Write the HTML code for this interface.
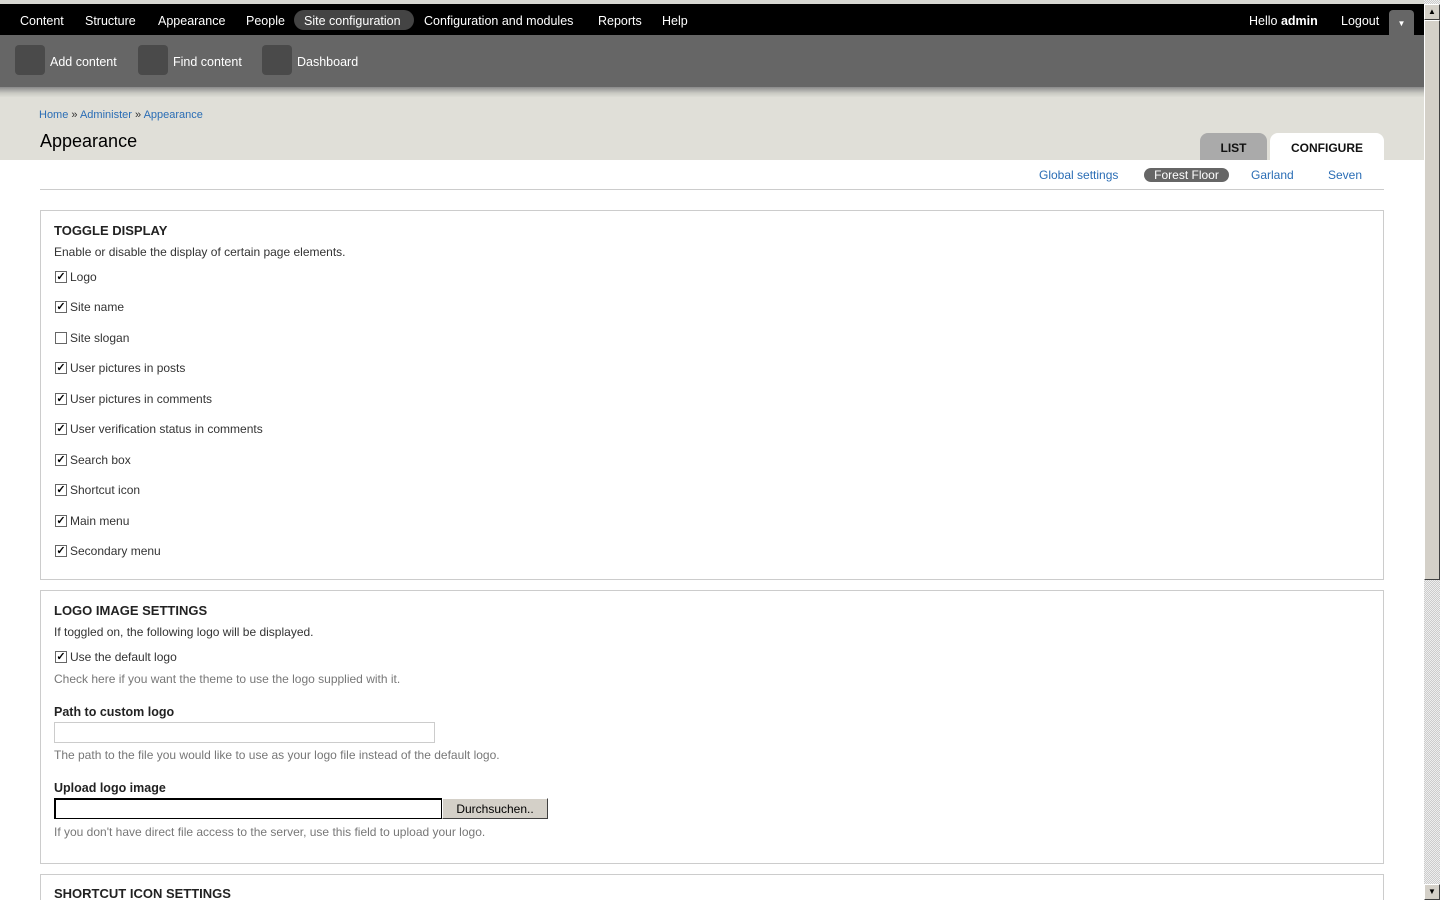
<!DOCTYPE html>
<html style="width:1440px;height:900px;overflow:hidden"><head><meta charset="utf-8"><style>
*{margin:0;padding:0;box-sizing:border-box}
body{width:1440px;height:900px;overflow:hidden;background:#fff;font-family:"Liberation Sans",sans-serif;font-size:12px;color:#333;position:relative}
.a{position:absolute;white-space:nowrap}
#top{left:0;top:0;width:1424px;height:4px;background:#d8d8d2}
#bar{left:0;top:4px;width:1424px;height:31px;background:#000}
#bar span{position:absolute;top:10px;color:#fff;font-size:12.5px}
#pill{left:294px;top:6px;width:120px;height:20px;background:#444;border-radius:10px}
#tb{left:0;top:35px;width:1424px;height:52px;background:#666}
#sh{left:0;top:87px;width:1424px;height:10px;background:linear-gradient(#8a8a8a,#c8c8c2 60%,#dcdcd5)}
.ic{position:absolute;top:10px;width:30px;height:30px;background:#4a4a4a;border-radius:4px}
#tb span{position:absolute;top:20px;color:#fff;font-size:12.5px}
#hd{left:0;top:97px;width:1424px;height:63px;background:#e0dfd8}
a{color:#2a6db5;text-decoration:none}
.fs{position:absolute;left:40px;width:1344px;border:1px solid #ccc}
.cb{position:absolute;left:55px;width:12px;height:12px;border:1px solid #666;background:#fff;font-size:11px;line-height:10px;text-align:center;font-weight:bold;color:#000}
.lb{position:absolute;left:70px;font-size:12px;color:#333}
.h{font-weight:bold;font-size:13px;color:#222}
.d{color:#777;font-size:12px}
#sb{left:1424px;top:0;width:16px;height:900px;background:repeating-conic-gradient(#ccc 0 25%,#eee 0 50%) 0 0/2px 2px}
.btn{position:absolute;width:16px;height:16px;background:#d4d0c8;border:1px solid;border-color:#fff #404040 #404040 #fff;font-size:8px;text-align:center;line-height:14px;color:#000}
</style></head><body>
<div class="a" id="top"></div>
<div class="a" id="bar">
<div class="a" id="pill"></div>
<span style="left:20px">Content</span><span style="left:85px">Structure</span><span style="left:158px">Appearance</span><span style="left:246px">People</span><span style="left:304px">Site configuration</span><span style="left:424px">Configuration and modules</span><span style="left:598px">Reports</span><span style="left:662px">Help</span>
<span style="left:1249px">Hello <b>admin</b></span><span style="left:1341px">Logout</span>
<div class="a" style="left:1389px;top:6px;width:25px;height:25px;background:#666;border-radius:4px 4px 0 0;color:#fff;font-size:8px;text-align:center;line-height:28px">▼</div>
</div>
<div class="a" id="tb">
<div class="ic" style="left:15px"></div><span style="left:50px">Add content</span>
<div class="ic" style="left:138px"></div><span style="left:173px">Find content</span>
<div class="ic" style="left:262px"></div><span style="left:297px">Dashboard</span>
</div>
<div class="a" id="sh"></div>
<div class="a" id="hd">
<div class="a" style="left:39px;top:12px;font-size:11px;color:#333"><a>Home</a> » <a>Administer</a> » <a>Appearance</a></div>
<div class="a" style="left:40px;top:34px;font-size:18px;color:#000">Appearance</div>
<div class="a" style="left:1200px;top:36px;width:67px;height:27px;background:#aaa;border-radius:8px 8px 0 0;font-weight:bold;font-size:12px;color:#111;text-align:center;line-height:30px">LIST</div>
<div class="a" style="left:1270px;top:36px;width:114px;height:27px;background:#fff;border-radius:8px 8px 0 0;font-weight:bold;font-size:12px;color:#111;text-align:center;line-height:30px">CONFIGURE</div>
</div>
<div class="a" style="left:1039px;top:168px"><a>Global settings</a></div>
<div class="a" style="left:1144px;top:168px;width:85px;height:14px;background:#666;border-radius:7px;color:#fff;text-align:center;line-height:14px">Forest Floor</div>
<div class="a" style="left:1251px;top:168px"><a>Garland</a></div>
<div class="a" style="left:1328px;top:168px"><a>Seven</a></div>
<div class="a" style="left:40px;top:189px;width:1344px;height:1px;background:#ccc"></div>

<div class="fs" style="top:210px;height:370px"></div>
<div class="a h" style="left:54px;top:223px">TOGGLE DISPLAY</div>
<div class="a" style="left:54px;top:245px">Enable or disable the display of certain page elements.</div>
<div class="cb" style="top:271px">✓</div><div class="a lb" style="top:270px">Logo</div>
<div class="cb" style="top:301px">✓</div><div class="a lb" style="top:300px">Site name</div>
<div class="cb" style="top:332px"></div><div class="a lb" style="top:331px">Site slogan</div>
<div class="cb" style="top:362px">✓</div><div class="a lb" style="top:361px">User pictures in posts</div>
<div class="cb" style="top:393px">✓</div><div class="a lb" style="top:392px">User pictures in comments</div>
<div class="cb" style="top:423px">✓</div><div class="a lb" style="top:422px">User verification status in comments</div>
<div class="cb" style="top:454px">✓</div><div class="a lb" style="top:453px">Search box</div>
<div class="cb" style="top:484px">✓</div><div class="a lb" style="top:483px">Shortcut icon</div>
<div class="cb" style="top:515px">✓</div><div class="a lb" style="top:514px">Main menu</div>
<div class="cb" style="top:545px">✓</div><div class="a lb" style="top:544px">Secondary menu</div>

<div class="fs" style="top:590px;height:274px"></div>
<div class="a h" style="left:54px;top:603px">LOGO IMAGE SETTINGS</div>
<div class="a" style="left:54px;top:625px">If toggled on, the following logo will be displayed.</div>
<div class="cb" style="top:651px">✓</div><div class="a lb" style="top:650px">Use the default logo</div>
<div class="a d" style="left:54px;top:672px">Check here if you want the theme to use the logo supplied with it.</div>
<div class="a h" style="left:54px;top:705px;font-size:12.5px">Path to custom logo</div>
<div class="a" style="left:54px;top:722px;width:381px;height:21px;border:1px solid #ccc"></div>
<div class="a d" style="left:54px;top:748px">The path to the file you would like to use as your logo file instead of the default logo.</div>
<div class="a h" style="left:54px;top:781px;font-size:12.5px">Upload logo image</div>
<div class="a" style="left:54px;top:798px;width:388px;height:21px;border:1px solid #000;border-width:2px 1px 1px 2px"></div>
<div class="a" style="left:442px;top:798px;width:106px;height:21px;background:#d4d0c8;border:1px solid;border-color:#fff #404040 #404040 #fff;text-align:center;line-height:20px;color:#000">Durchsuchen..</div>
<div class="a d" style="left:54px;top:825px">If you don't have direct file access to the server, use this field to upload your logo.</div>

<div class="fs" style="top:874px;height:26px;border-bottom:none"></div>
<div class="a h" style="left:54px;top:886px">SHORTCUT ICON SETTINGS</div>

<div class="a" id="sb">
<div class="btn" style="top:4px;left:0">▲</div>
<div class="a" style="left:0;top:20px;width:16px;height:560px;background:#d4d0c8;border:1px solid;border-color:#fff #404040 #404040 #fff"></div>
<div class="btn" style="top:884px;left:0">▼</div>
</div>
</body></html>
